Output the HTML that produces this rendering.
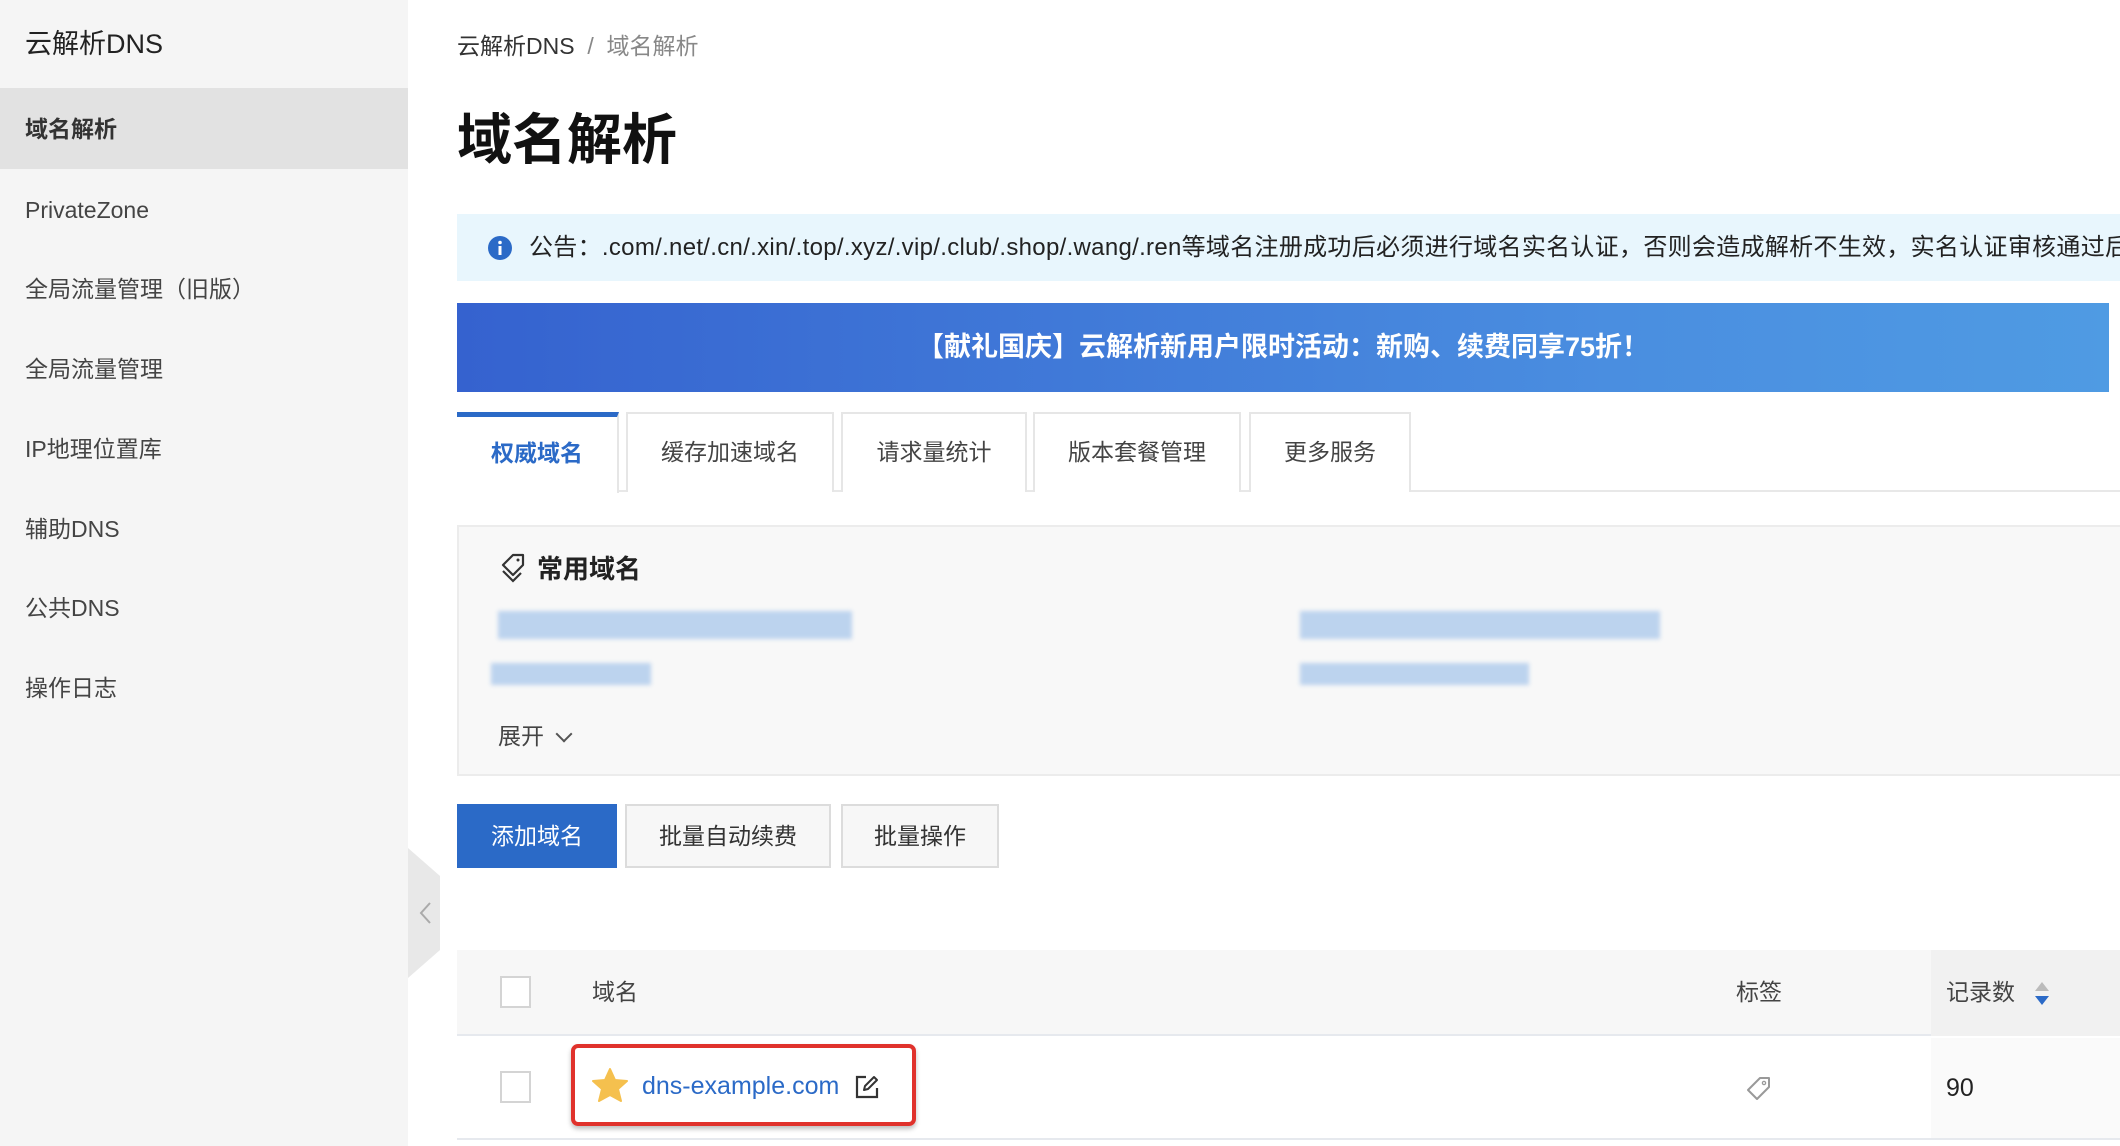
<!DOCTYPE html>
<html><head><meta charset="utf-8">
<style>
*{margin:0;padding:0;box-sizing:border-box}
body{width:2120px;height:1146px;overflow:hidden;background:#fff;font-family:"Liberation Sans","Noto Sans CJK SC",sans-serif;color:#333;position:relative}
.abs{position:absolute}
.side{left:0;top:0;width:408px;height:1146px;background:#f5f5f5}
.side .t{left:25px;top:22px;font-size:27px;color:#222}
.side .act{left:0;top:88px;width:408px;height:81px;background:#e2e2e2}
.mi{left:25px;font-size:23px;color:#444;line-height:30px}
.bc{left:457px;top:27px;font-size:23px;color:#333}
.bc span{color:#888}
h1{position:absolute;left:457px;top:106px;font-size:55px;font-weight:bold;color:#111;line-height:68px}
.notice{left:457px;top:214px;width:1663px;height:67px;background:#e8f6fd;white-space:nowrap;overflow:hidden;font-size:24px;letter-spacing:0.3px;line-height:67px;padding-left:72px;color:#222}
.banner{left:457px;top:303px;width:1652px;height:89px;background:linear-gradient(90deg,#3562cf,#4a8ee0 70%,#4f9be3);color:#fff;font-size:27px;font-weight:bold;text-align:center;line-height:89px}
.tabline{left:457px;top:490px;width:1663px;height:2px;background:#e8e8e8}
.tab{top:412px;height:80px;border:2px solid #e6e6e6;border-bottom:none;background:#fff;font-size:23px;color:#444;text-align:center;line-height:76px}
.tab.on{border-top:5px solid #2b6ac7;color:#2b6ac7;font-weight:bold;line-height:72px;height:81px;border-left:none}
.card{left:457px;top:525px;width:1663px;height:251px;background:#f8f8f8;border:2px solid #ececec;border-right:none}
.blur{background:#bcd3ee;filter:blur(2px)}
.btn{top:804px;height:64px;font-size:23px;line-height:60px;text-align:center;border:2px solid #dcdcdc;background:#f7f7f7;color:#333}
.th{left:457px;top:950px;width:1663px;height:86px;background:#f7f7f7;border-bottom:2px solid #e6e9ee}
.cb{width:31px;height:32px;border:2px solid #d4d4d4;background:#fff}
</style></head><body>
<div class="abs side">
 <div class="abs t">云解析DNS</div>
 <div class="abs act"></div>
 <div class="abs mi" style="top:114px;font-weight:bold;color:#333">域名解析</div>
 <div class="abs mi" style="top:195px">PrivateZone</div>
 <div class="abs mi" style="top:274px">全局流量管理（旧版）</div>
 <div class="abs mi" style="top:354px">全局流量管理</div>
 <div class="abs mi" style="top:434px">IP地理位置库</div>
 <div class="abs mi" style="top:514px">辅助DNS</div>
 <div class="abs mi" style="top:593px">公共DNS</div>
 <div class="abs mi" style="top:673px">操作日志</div>
</div>
<svg class="abs" style="left:408px;top:848px" width="34" height="130"><path d="M0 0 L32 28 L32 102 L0 130 Z" fill="#e8e8e8"/><path d="M22 55 L13 65 L22 75" stroke="#aaa" stroke-width="2" fill="none"/></svg>

<div class="abs bc">云解析DNS &nbsp;<span>/ &nbsp;域名解析</span></div>
<h1>域名解析</h1>
<div class="abs notice">公告：.com/.net/.cn/.xin/.top/.xyz/.vip/.club/.shop/.wang/.ren等域名注册成功后必须进行域名实名认证，否则会造成解析不生效，实名认证审核通过后</div>
<svg class="abs" style="left:488px;top:236px" width="24" height="24"><circle cx="12" cy="12" r="12" fill="#2b6ac7"/><rect x="10.5" y="10" width="3" height="9" fill="#fff"/><circle cx="12" cy="6.5" r="1.8" fill="#fff"/></svg>
<div class="abs banner">【献礼国庆】云解析新用户限时活动：新购、续费同享75折！</div>

<div class="abs tabline"></div>
<div class="abs tab on" style="left:457px;width:162px">权威域名</div>
<div class="abs tab" style="left:626px;width:208px">缓存加速域名</div>
<div class="abs tab" style="left:841px;width:186px">请求量统计</div>
<div class="abs tab" style="left:1033px;width:208px">版本套餐管理</div>
<div class="abs tab" style="left:1249px;width:162px">更多服务</div>

<div class="abs card"></div>
<svg class="abs" style="left:500px;top:553px" width="26" height="30"><path d="M3 12 L13 2 L23 2 L23 12 L13 22 Z" stroke="#333" stroke-width="2.2" fill="none" stroke-linejoin="round"/><circle cx="18" cy="7" r="1.5" fill="#333"/><path d="M3 18 L13 28 L21 20" stroke="#333" stroke-width="2.2" fill="none"/></svg>
<div class="abs" style="left:537px;top:549px;font-size:26px;font-weight:bold;color:#222">常用域名</div>
<div class="abs blur" style="left:498px;top:611px;width:354px;height:28px"></div>
<div class="abs blur" style="left:1300px;top:611px;width:360px;height:28px"></div>
<div class="abs blur" style="left:491px;top:663px;width:160px;height:22px"></div>
<div class="abs blur" style="left:1300px;top:663px;width:229px;height:22px"></div>
<div class="abs" style="left:498px;top:717px;font-size:23px;color:#444">展开 <span style="display:inline-block;width:12px;height:12px;border-right:2px solid #555;border-bottom:2px solid #555;transform:rotate(45deg);margin-left:8px;position:relative;top:-4px"></span></div>

<div class="abs btn" style="left:457px;width:160px;background:#2b6ac7;border-color:#2b6ac7;color:#fff">添加域名</div>
<div class="abs btn" style="left:625px;width:206px">批量自动续费</div>
<div class="abs btn" style="left:841px;width:158px">批量操作</div>

<div class="abs th"></div>
<div class="abs" style="left:1931px;top:950px;width:189px;height:86px;background:#f1f1f1"></div>
<div class="abs" style="left:1931px;top:1038px;width:189px;height:100px;background:#fafafa"></div>
<div class="abs cb" style="left:500px;top:976px"></div>
<div class="abs" style="left:592px;top:973px;font-size:23px;color:#444">域名</div>
<div class="abs" style="left:1736px;top:973px;font-size:23px;color:#444">标签</div>
<div class="abs" style="left:1946px;top:973px;font-size:23px;color:#444">记录数</div>
<svg class="abs" style="left:2034px;top:980px" width="16" height="28"><path d="M1 11 L8 2 L15 11Z" fill="#bbb"/><path d="M1 16 L8 25 L15 16Z" fill="#2b6ac7"/></svg>
<div class="abs" style="left:457px;top:1138px;width:1663px;height:2px;background:#e6e9ee"></div>
<div class="abs cb" style="left:500px;top:1071px"></div>
<div class="abs" style="left:571px;top:1044px;width:345px;height:82px;border:4px solid #e0322c;border-radius:7px;box-shadow:0 3px 5px rgba(0,0,0,.25)"></div>
<svg class="abs" style="left:592px;top:1068px" width="36" height="34"><path d="M18 1 L23 12 L35 13 L26 21 L29 33 L18 27 L7 33 L10 21 L1 13 L13 12Z" fill="#f5c04e" stroke="#f5c04e" stroke-linejoin="round" stroke-width="2"/></svg>
<div class="abs" style="left:642px;top:1072px;font-size:25px;color:#2b6ac7">dns-example.com</div>
<svg class="abs" style="left:855px;top:1075px" width="24" height="24"><path d="M11 2 H2 V22 H22 V13" stroke="#333" stroke-width="2.2" fill="none"/><path d="M9 15 L10 11 L19 2 L22 5 L13 14 Z" stroke="#333" stroke-width="2" fill="none" stroke-linejoin="round"/></svg>
<svg class="abs" style="left:1746px;top:1075px" width="26" height="26"><path d="M2 15 L14 3 L23 3 L23 12 L11 24 Z" stroke="#999" stroke-width="2" fill="none" stroke-linejoin="round"/><circle cx="18" cy="8" r="1.6" fill="none" stroke="#999" stroke-width="1.3"/></svg>
<div class="abs" style="left:1946px;top:1074px;font-size:25px;color:#222">90</div>
</body></html>
